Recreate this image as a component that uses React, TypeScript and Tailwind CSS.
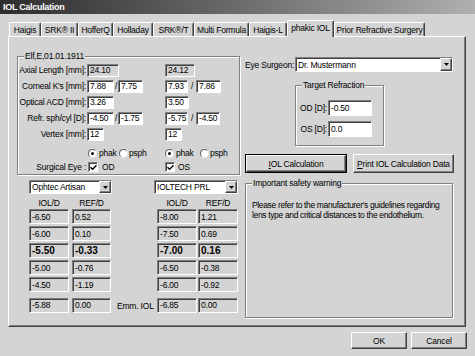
import React from "react";

// classic win32 bevels
const sunken =
  "border border-t-[#808080] border-l-[#808080] border-b-white border-r-white shadow-[inset_1px_1px_0_#404040]";
const raised =
  "border border-t-white border-l-white border-b-[#404040] border-r-[#404040] shadow-[inset_-1px_-1px_0_#808080]";
const etched = "border border-[#808080] shadow-[inset_1px_1px_0_#fff,1px_1px_0_#fff]";

function Field({ w, v, gray }: { w: string; v: string; gray?: boolean }) {
  return (
    <div
      className={`${w} h-[13px] ${gray ? "bg-[#d4d4d4]" : "bg-white"} ${sunken} flex items-center pl-[2px] leading-none whitespace-nowrap`}
    >
      {v}
    </div>
  );
}

function Slash({ w }: { w: string }) {
  return <span className={`${w} text-center leading-none`}>/</span>;
}

function Radio({ on }: { on?: boolean }) {
  return (
    <div className="w-[9px] h-[9px] rounded-full bg-white border border-t-[#606060] border-l-[#606060] border-b-[#e8e8e8] border-r-[#e8e8e8] flex items-center justify-center">
      {on && <div className="w-[3px] h-[3px] rounded-full bg-black" />}
    </div>
  );
}

function Check() {
  return (
    <div className={`w-[10px] h-[10px] bg-white ${sunken} flex items-center justify-center`}>
      <svg width="7" height="7" viewBox="0 0 7 7">
        <path d="M0.5 3.2 L2.6 5.3 L6.5 1.2" stroke="#000" strokeWidth="1.4" fill="none" />
      </svg>
    </div>
  );
}

function Combo({ w, h, v }: { w: string; h: string; v: string }) {
  return (
    <div className={`${w} ${h} bg-white ${sunken} flex items-stretch`}>
      <div className="flex-1 flex items-center pl-[2px] whitespace-nowrap overflow-hidden">{v}</div>
      <div className={`w-[12px] bg-[#d4d4d4] ${raised} flex items-center justify-center`}>
        <svg width="5" height="3" viewBox="0 0 5 3">
          <path d="M0 0 H5 L2.5 3 Z" fill="#000" />
        </svg>
      </div>
    </div>
  );
}

function Cell({ w, v, bold }: { w: string; v: string; bold?: boolean }) {
  return (
    <div
      className={`${w} h-[15px] ${sunken} flex items-center pl-[2px] whitespace-nowrap ${bold ? "font-bold text-[10px] tracking-[0px]" : ""}`}
    >
      {v}
    </div>
  );
}

const tabs = [
  { t: "Haigis", w: "w-[32px]" },
  { t: "SRK® II", w: "w-[37px]" },
  { t: "HofferQ", w: "w-[35px]" },
  { t: "Holladay", w: "w-[40px]" },
  { t: "SRK®/T", w: "w-[41px]" },
  { t: "Multi Formula", w: "w-[55px]" },
  { t: "Haigis-L", w: "w-[38px]" },
  { t: "phakic IOL", w: "w-[47px]", active: true },
  { t: "Prior Refractive Surgery", w: "w-[91px]" },
];

const leftRows = [
  ["-6.50", "0.52"],
  ["-6.00", "0.10"],
  ["-5.50", "-0.33"],
  ["-5.00", "-0.76"],
  ["-4.50", "-1.19"],
];
const rightRows = [
  ["-8.00", "1.21"],
  ["-7.50", "0.69"],
  ["-7.00", "0.16"],
  ["-6.50", "-0.38"],
  ["-6.00", "-0.92"],
];

export default function App() {
  return (
    <div className="w-[475px] h-[356px] overflow-hidden bg-[#d4d4d4] text-black font-['Liberation_Sans',Arial,sans-serif] text-[8.5px] tracking-[-0.2px] leading-[10px] flex flex-col">
      {/* title bar */}
      <div className="h-[14px] bg-gradient-to-r from-[#2e2e2e] to-[#b0b0b0] text-white font-bold text-[9px] tracking-[-0.3px] pl-[3px] flex items-center">
        IOL Calculation
      </div>

      {/* tabs */}
      <div className="ml-[9px] mt-[6px] h-[16px] flex items-end">
        {tabs.map((tab) =>
          tab.active ? (
            <div
              key={tab.t}
              className={`${tab.w} h-[17px] -mb-[1px] relative z-10 bg-[#d4d4d4] border-t border-l border-white border-r border-r-[#404040] shadow-[inset_-1px_0_0_#808080] rounded-t-[2px] flex items-center justify-center pb-[2px] whitespace-nowrap`}
            >
              {tab.t}
            </div>
          ) : (
            <div
              key={tab.t}
              className={`${tab.w} h-[14px] border-t border-l border-white border-r border-r-[#404040] shadow-[inset_-1px_0_0_#808080] rounded-t-[2px] flex items-center justify-center whitespace-nowrap`}
            >
              {tab.t}
            </div>
          )
        )}
      </div>

      {/* tab page */}
      <div className="ml-[8px] w-[458px] h-[291px] border-t border-l border-white border-b border-r border-b-[#404040] border-r-[#404040] shadow-[inset_-1px_-1px_0_#808080] flex">
        {/* left column */}
        <div className="ml-[8px] pt-[14px] w-[223px] flex flex-col">
          <fieldset className={`h-[124px] ${etched}`}>
            <legend className="ml-[6px] px-[1px] bg-[#d4d4d4] leading-[10px]">Elf,E,01.01.1911</legend>
            <div className="mt-[1px] flex flex-col">
              <div className="flex h-[16px] items-center">
                <div className="w-[68px] text-right whitespace-nowrap">Axial Length [mm]:</div>
                <div className="ml-[1px] w-[78px] flex items-center">
                  <Field w="w-[32px]" v="24.10" gray />
                </div>
                <Field w="w-[30px]" v="24.12" gray />
              </div>
              <div className="flex h-[16px] items-center">
                <div className="w-[68px] text-right whitespace-nowrap">Corneal K's [mm]:</div>
                <div className="ml-[1px] w-[78px] flex items-center">
                  <Field w="w-[27px]" v="7.88" />
                  <Slash w="w-[4px]" />
                  <Field w="w-[25px]" v="7.75" />
                </div>
                <Field w="w-[23px]" v="7.93" />
                <Slash w="w-[8px]" />
                <Field w="w-[25px]" v="7.86" />
              </div>
              <div className="flex h-[16px] items-center">
                <div className="w-[68px] text-right whitespace-nowrap">Optical ACD [mm]:</div>
                <div className="ml-[1px] w-[78px] flex items-center">
                  <Field w="w-[27px]" v="3.26" />
                </div>
                <Field w="w-[24px]" v="3.50" />
              </div>
              <div className="flex h-[16px] items-center">
                <div className="w-[68px] text-right whitespace-nowrap">Refr. sph/cyl [D]:</div>
                <div className="ml-[1px] w-[78px] flex items-center">
                  <Field w="w-[27px]" v="-4.50" />
                  <Slash w="w-[4px]" />
                  <Field w="w-[25px]" v="-1.75" />
                </div>
                <Field w="w-[23px]" v="-5.75" />
                <Slash w="w-[8px]" />
                <Field w="w-[24px]" v="-4.50" />
              </div>
              <div className="flex h-[16px] items-center">
                <div className="w-[68px] text-right whitespace-nowrap">Vertex [mm]:</div>
                <div className="ml-[1px] w-[78px] flex items-center">
                  <Field w="w-[17px]" v="12" />
                </div>
                <Field w="w-[17px]" v="12" />
              </div>
              <div className="mt-[3px] flex h-[16px] items-center">
                <div className="w-[68px]" />
                <div className="ml-[1px] w-[78px] flex items-center">
                  <div className="w-[32px] flex items-center gap-[2px] pl-[1px]">
                    <Radio on />
                    <span>phak</span>
                  </div>
                  <div className="flex items-center gap-[1px]">
                    <Radio />
                    <span>psph</span>
                  </div>
                </div>
                <div className="w-[35px] flex items-center gap-[2px]">
                  <Radio on />
                  <span>phak</span>
                </div>
                <div className="flex items-center gap-[1px]">
                  <Radio />
                  <span>psph</span>
                </div>
              </div>
              <div className="flex h-[12px] items-center">
                <div className="w-[68px] text-right whitespace-nowrap">Surgical Eye :</div>
                <div className="ml-[2px] w-[77px] flex items-center gap-[4px]">
                  <Check />
                  <span>OD</span>
                </div>
                <div className="flex items-center gap-[3px]">
                  <Check />
                  <span>OS</span>
                </div>
              </div>
            </div>
          </fieldset>

          <div className="mt-[5px] flex">
            <div className="ml-[12px]">
              <Combo w="w-[83px]" h="h-[14px]" v="Ophtec Artisan" />
            </div>
            <div className="ml-[42px]">
              <Combo w="w-[84px]" h="h-[14px]" v="IOLTECH PRL" />
            </div>
          </div>

          <div className="h-[15px] pt-[3px] flex items-center">
            <div className="ml-[12px] w-[40px] text-center">IOL/D</div>
            <div className="ml-[3px] w-[39px] text-center">REF/D</div>
            <div className="w-[46px]" />
            <div className="w-[40px] text-center">IOL/D</div>
            <div className="ml-[1px] w-[40px] text-center">REF/D</div>
          </div>

          {leftRows.map((r, i) => (
            <div key={i} className="h-[17px] flex">
              <div className="ml-[12px]">
                <Cell w="w-[40px]" v={r[0]} bold={i === 2} />
              </div>
              <div className="ml-[3px]">
                <Cell w="w-[39px]" v={r[1]} bold={i === 2} />
              </div>
              <div className="w-[46px]" />
              <Cell w="w-[40px]" v={rightRows[i][0]} bold={i === 2} />
              <div className="ml-[1px]">
                <Cell w="w-[40px]" v={rightRows[i][1]} bold={i === 2} />
              </div>
            </div>
          ))}

          <div className="mt-[3px] h-[16px] flex items-center">
            <div className="ml-[12px]">
              <Cell w="w-[40px]" v="-5.88" />
            </div>
            <div className="ml-[3px]">
              <Cell w="w-[39px]" v="0.00" />
            </div>
            <div className="w-[46px] pl-[6px] pt-[2px] whitespace-nowrap">Emm. IOL</div>
            <Cell w="w-[40px]" v="-6.85" />
            <div className="ml-[1px]">
              <Cell w="w-[40px]" v="0.00" />
            </div>
          </div>
        </div>

        {/* right column */}
        <div className="ml-[5px] mt-[20px] w-[210px] flex flex-col">
          <div className="h-[15px] flex items-center">
            <div className="w-[48px] text-right whitespace-nowrap">Eye Surgeon:</div>
            <div className="ml-[2px]">
              <Combo w="w-[158px]" h="h-[15px]" v="Dr. Mustermann" />
            </div>
          </div>

          <fieldset className={`ml-[50px] mt-[8px] w-[89px] h-[66px] ${etched}`}>
            <legend className="ml-[6px] px-[1px] bg-[#d4d4d4] leading-[10px]">Target Refraction</legend>
            <div className="mt-[10px] h-[16px] flex items-center">
              <div className="w-[31px] text-right whitespace-nowrap">OD [D]:</div>
              <div className={`ml-[1px] w-[44px] h-[16px] bg-white flex items-center pl-[2px] ${sunken}`}>-0.50</div>
            </div>
            <div className="mt-[5px] h-[16px] flex items-center">
              <div className="w-[31px] text-right whitespace-nowrap">OS [D]:</div>
              <div className={`ml-[1px] w-[44px] h-[16px] bg-white flex items-center pl-[2px] ${sunken}`}>0.0</div>
            </div>
          </fieldset>

          <div className="mt-[8px] h-[19px] flex">
            <button className="w-[102px] h-[19px] border border-black p-0">
              <div className={`w-full h-full ${raised} flex items-center justify-center`}>
                <span>
                  <span className="underline">I</span>OL Calculation
                </span>
              </div>
            </button>
            <button className={`ml-[6px] w-[101px] h-[19px] ${raised} flex items-center justify-center`}>
              <span>
                <span className="underline">P</span>rint IOL Calculation Data
              </span>
            </button>
          </div>

          <fieldset className={`mt-[5px] w-[208px] h-[140px] ${etched}`}>
            <legend className="ml-[6px] px-[1px] bg-[#d4d4d4] leading-[10px]">Important safety warning</legend>
            <p className="mt-[12px] pl-[6px] leading-[10px] tracking-[-0.35px] whitespace-nowrap">
              Please refer to the manufacturer's guidelines regarding
              <br />
              lens type and critical distances to the endothelium.
            </p>
          </fieldset>
        </div>
      </div>

      {/* dialog buttons */}
      <div className="mt-[5px] pr-[8px] flex justify-end gap-[4px]">
        <button className={`w-[56px] h-[17px] ${raised} flex items-center justify-center`}>OK</button>
        <button className={`w-[56px] h-[17px] ${raised} flex items-center justify-center`}>Cancel</button>
      </div>
    </div>
  );
}
